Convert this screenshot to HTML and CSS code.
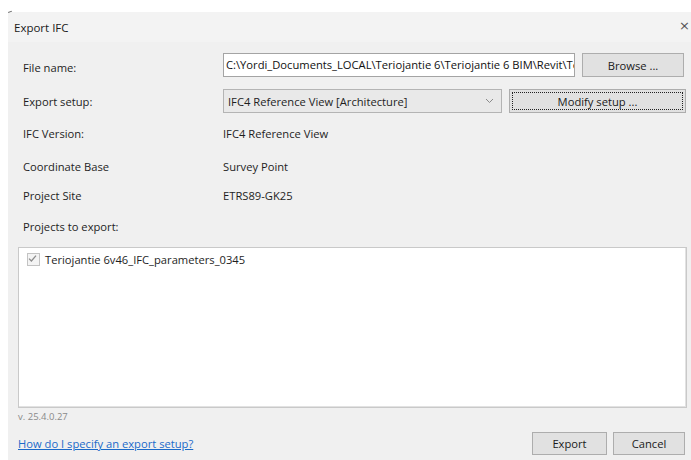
FILE: index.html
```html
<!DOCTYPE html>
<html lang="en">
<head>
<meta charset="utf-8">
<title>Export IFC</title>
<link rel="stylesheet" href="styles.css">
</head>
<body>
<div class="window">
  <div class="titlebar">
    <span class="corner"></span>
    <span class="title">Export IFC</span>
    <span class="close">×</span>
  </div>
  <div class="content">
    <div class="row row-input">
      <span class="label">File name:</span>
      <div class="field">
        <div class="textbox">C:\Yordi_Documents_LOCAL\Teriojantie 6\Teriojantie 6 BIM\Revit\Ter</div>
        <button class="btn btn-browse">Browse ...</button>
      </div>
    </div>
    <div class="row row-input row-setup">
      <span class="label">Export setup:</span>
      <div class="field">
        <div class="combo">
          <span>IFC4 Reference View [Architecture]</span>
          <svg class="chev" width="9" height="6" viewBox="0 0 9 6"><path d="M1 1 L4.5 4.5 L8 1" fill="none" stroke="#8a8a8a" stroke-width="1"/></svg>
        </div>
        <button class="btn btn-modify"><span class="focus">Modify setup ...</span></button>
      </div>
    </div>
    <div class="row row-ver">
      <span class="label">IFC Version:</span>
      <span class="value">IFC4 Reference View</span>
    </div>
    <div class="row row-coord">
      <span class="label">Coordinate Base</span>
      <span class="value">Survey Point</span>
    </div>
    <div class="row row-site">
      <span class="label">Project Site</span>
      <span class="value">ETRS89-GK25</span>
    </div>
    <div class="row row-projects">
      <span class="label">Projects to export:</span>
    </div>
    <div class="listbox">
      <label class="item">
        <span class="check">
          <svg width="11" height="11" viewBox="0 0 11 11"><path d="M2 5.6 L4.4 8 L9 2.6" fill="none" stroke="#8c8c8c" stroke-width="1.3"/></svg>
        </span>
        <span>Teriojantie 6v46_IFC_parameters_0345</span>
      </label>
    </div>
    <div class="version">v. 25.4.0.27</div>
    <div class="footer">
      <a class="help" href="#">How do I specify an export setup?</a>
      <div class="actions">
        <button class="btn btn-export">Export</button>
        <button class="btn btn-cancel">Cancel</button>
      </div>
    </div>
  </div>
</div>
</body>
</html>
```

FILE: styles.css
```css
html, body {
  margin: 0;
  padding: 0;
  background: #ffffff;
  overflow: hidden;
}

body {
  width: 691px;
  height: 460px;
  font-family: "Open Sans", "Noto Sans", sans-serif;
  font-size: 11.2px;
  color: #1e1e1e;
}

.window {
  margin: 12px 0 0 8px;
  width: 700px;
  height: 448px;
  background: #f0f0f0;
}

.titlebar {
  position: relative;
  height: 30px;
  background: #f3f3f3;
  display: flex;
  align-items: center;
  padding-left: 6px;
  font-size: 11.5px;
  color: #1a1a1a;
}

.corner {
  position: absolute;
  left: 0;
  top: 0;
  width: 4px;
  height: 2px;
  border-top: 1px solid #6e6e6e;
  transform: rotate(-20deg);
  transform-origin: left top;
}

.close {
  position: absolute;
  left: 671px;
  top: 6px;
  font-size: 13px;
  line-height: 16px;
  color: #555;
  font-family: "DejaVu Sans", sans-serif;
}

.content {
  padding: 11px 0 0 10px;
  width: 668px;
}

.row {
  display: flex;
  align-items: center;
}

.label {
  width: 200px;
  padding-left: 5px;
  flex: none;
}

.row-input {
  height: 24px;
}

.row-input .label {
  padding-top: 5px;
}

.row-setup {
  margin-top: 12px;
}

.row-setup .label {
  padding-top: 0;
}

.row-ver { height: 32px; margin-top: 4px; }
.row-coord { height: 34px; }
.row-site { height: 25px; }
.row-projects { height: 37px; }

.field {
  display: flex;
  align-items: stretch;
  height: 24px;
  flex: 1;
}

.textbox {
  width: 348px;
  height: 22px;
  background: #ffffff;
  border: 1px solid #a4a4a4;
  padding-left: 2px;
  line-height: 22px;
  white-space: nowrap;
  overflow: hidden;
  box-sizing: content-box;
  color: #111;
}

.btn {
  font-family: inherit;
  font-size: 11.2px;
  color: #1a1a1a;
  background: #e1e1e1;
  border: 1px solid #adadad;
  padding: 0;
  margin: 0;
}

.btn-browse {
  margin-left: 7px;
  width: 102px;
  height: 24px;
}

.combo {
  height: 22px;
  background: #e9e9e9;
  border: 1px solid #b4b4b4;
  display: flex;
  align-items: center;
  justify-content: space-between;
  padding: 0 7px 0 4px;
  box-sizing: content-box;
  width: 266px;
}

.chev {
  display: block;
}

.btn-modify {
  margin-left: 7px;
  width: 177px;
  height: 24px;
  padding: 2px;
}

.btn-modify .focus {
  display: flex;
  align-items: center;
  justify-content: center;
  height: 100%;
  box-sizing: border-box;
  border: 1px dotted #222;
}

.listbox {
  margin-top: 2px;
  width: 667px;
  height: 159px;
  background: #ffffff;
  border: 1px solid #c9c9c9;
  box-shadow: inset -1px -1px 0 #e2e2e2;
}

.item {
  display: flex;
  align-items: center;
  gap: 5px;
  margin: 4px 0 0 8px;
  height: 14px;
}

.check {
  width: 11px;
  height: 11px;
  border: 1px solid #c3c3c3;
  background: #f4f4f4;
  display: block;
}

.check svg {
  display: block;
  margin: -1px 0 0 -1px;
}

.version {
  height: 15px;
  line-height: 15px;
  font-size: 9.5px;
  color: #8a8a8a;
  margin-top: 1px;
}

.footer {
  margin-top: 8px;
  display: flex;
  align-items: center;
  justify-content: space-between;
  height: 23px;
}

.help {
  color: #1b6ac9;
  text-decoration: underline;
}

.actions {
  display: flex;
  gap: 6px;
  margin-right: 1px;
}

.btn-export,
.btn-cancel {
  width: 75px;
  height: 23px;
}

.btn-cancel {
  width: 72px;
}
```
